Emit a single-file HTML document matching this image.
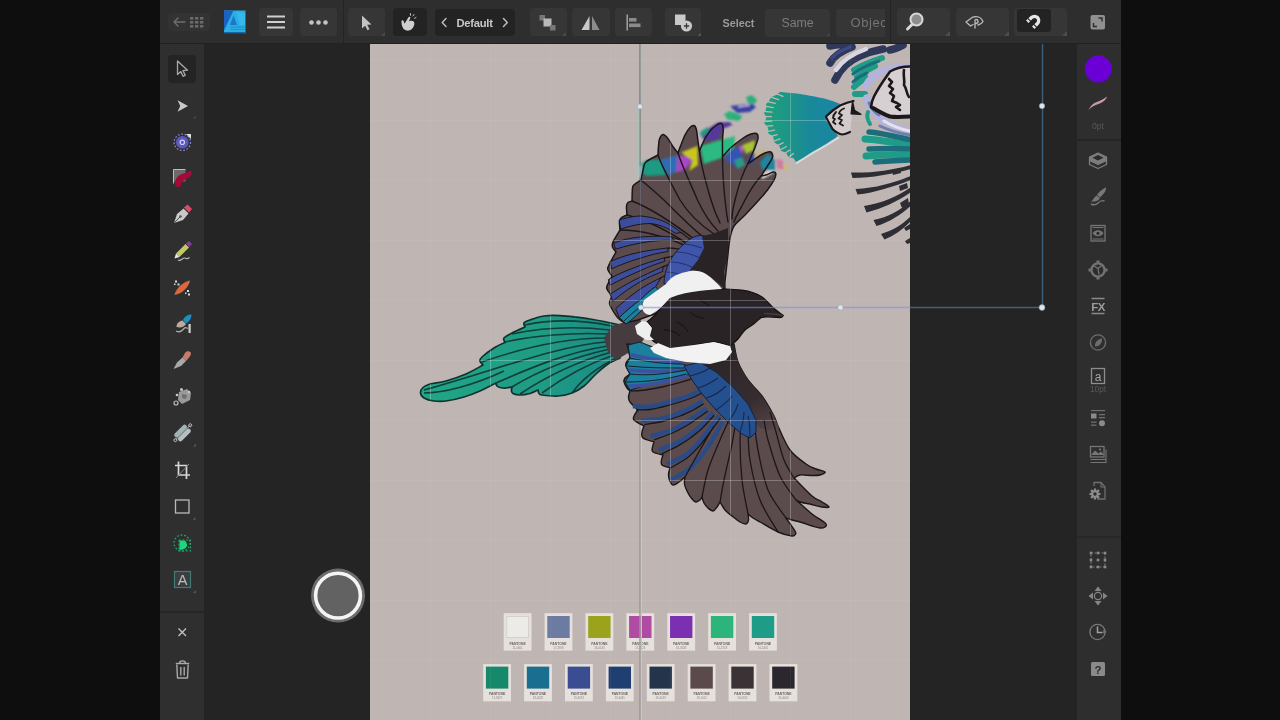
<!DOCTYPE html>
<html><head><meta charset="utf-8"><title>Affinity Designer</title>
<style>
*{box-sizing:border-box;margin:0;padding:0}
html,body{width:1280px;height:720px;overflow:hidden;background:#0e0e0e;font-family:"Liberation Sans",sans-serif}
#app{position:absolute;left:160px;top:0;width:961px;height:720px;background:#242424;overflow:hidden}
#art{position:absolute;left:210px;top:44px;width:540px;height:676px;background:#bfb6b4}
#top{position:absolute;left:0;top:0;width:961px;height:44px;background:#2e2e2e}
#left{position:absolute;left:0;top:44px;width:44px;height:676px;background:#2f2f2f}
#right{position:absolute;left:917px;top:44px;width:44px;height:676px;background:#2e2e2e}
.btn{position:absolute;top:8px;height:28px;background:#363636;border-radius:4px}
.dk{background:#232323}
.t{position:absolute;color:#8a8a8a;font-size:12.5px;line-height:14px;white-space:nowrap}
svg{position:absolute;left:0;top:0;overflow:visible}
#wrap{position:absolute;left:-20px;top:-20px;width:1001px;height:760px;background:#242424;filter:blur(0.5px)}
#inner{position:absolute;left:20px;top:20px;width:961px;height:720px}
</style></head><body>
<div id="app">
<div id="wrap"><div id="inner">
<div id="art"></div>
<svg width="960" height="720" viewBox="160 0 960 720">
<defs>
<clipPath id="artclip"><rect x="370" y="44" width="540" height="676"/></clipPath>
<linearGradient id="fan" x1="765" y1="0" x2="840" y2="0" gradientUnits="userSpaceOnUse"><stop offset="0" stop-color="#1fa07c"/><stop offset=".3" stop-color="#1c9686"/><stop offset=".6" stop-color="#19889a"/><stop offset="1" stop-color="#1a86a2"/></linearGradient>
<filter id="b1" x="-10%" y="-10%" width="120%" height="120%"><feGaussianBlur stdDeviation="0.9"/></filter>
<clipPath id="birdclip"><path d="M625.0 323.0C623.8 322.2 620.2 320.3 618.0 318.0C615.8 315.7 613.4 311.5 612.0 309.0C610.6 306.5 609.5 305.2 609.5 303.0C609.5 300.8 611.6 297.2 612.0 296.0C611.2 295.0 608.3 291.7 607.5 290.0C606.7 288.3 606.2 288.3 607.0 286.0C607.8 283.7 611.2 277.7 612.0 276.0C611.3 275.0 608.6 271.7 608.0 270.0C607.4 268.3 607.2 269.0 608.5 266.0C609.8 263.0 614.8 254.3 616.0 252.0C615.4 251.2 613.0 248.7 612.5 247.0C612.0 245.3 611.8 244.8 613.0 242.0C614.2 239.2 618.8 232.0 620.0 230.0C619.9 228.7 619.3 224.0 619.5 222.0C619.7 220.0 619.8 219.2 621.0 218.0C622.2 216.8 626.0 215.5 627.0 215.0C626.9 213.5 626.3 208.1 626.5 206.0C626.7 203.9 627.1 203.3 628.0 202.5C628.9 201.7 631.3 201.2 632.0 201.0C632.1 198.8 632.1 190.8 632.5 188.0C632.9 185.2 633.1 185.8 634.5 184.5C635.9 183.2 639.9 180.8 641.0 180.0C641.4 178.0 642.7 171.0 643.5 168.0C644.3 165.0 643.6 164.2 646.0 162.0C648.4 159.8 656.0 156.2 658.0 155.0C658.1 153.5 658.2 148.7 658.5 146.0C658.8 143.3 658.8 140.9 659.5 139.0C660.2 137.1 661.7 134.7 663.0 134.5C664.3 134.3 665.9 136.1 667.5 138.0C669.1 139.9 670.8 143.5 672.5 146.0C674.2 148.5 677.1 151.8 678.0 153.0C678.4 151.8 679.3 149.0 680.5 146.0C681.7 143.0 683.4 138.1 685.0 135.0C686.6 131.9 688.5 129.1 690.0 127.5C691.5 125.9 692.9 125.1 694.0 125.5C695.1 125.9 695.9 127.6 696.5 130.0C697.1 132.4 697.3 136.5 697.8 140.0C698.3 143.5 699.2 149.2 699.5 151.0C699.8 150.2 700.6 148.1 701.5 146.0C702.4 143.9 703.6 141.0 705.0 138.5C706.4 136.0 708.2 133.2 710.0 131.0C711.8 128.8 714.1 126.8 716.0 125.5C717.9 124.2 720.3 122.9 721.5 123.5C722.7 124.1 723.0 126.2 723.2 129.0C723.4 131.8 722.6 135.3 722.5 140.0C722.4 144.7 722.5 154.2 722.5 157.0C723.8 155.6 726.7 151.6 730.0 148.5C733.3 145.4 739.0 140.9 742.5 138.5C746.0 136.1 748.7 134.8 751.0 134.0C753.3 133.2 755.3 132.8 756.5 133.5C757.7 134.2 758.4 135.8 758.0 138.5C757.6 141.2 755.7 145.8 754.0 150.0C752.3 154.2 749.0 161.2 748.0 163.5C748.7 163.1 749.8 162.4 752.0 161.0C754.2 159.6 758.3 156.5 761.0 155.0C763.7 153.5 766.2 152.4 768.0 152.0C769.8 151.6 770.8 151.6 771.5 152.5C772.2 153.4 773.2 155.2 772.5 157.5C771.8 159.8 769.4 162.9 767.5 166.0C765.6 169.1 762.1 174.3 761.0 176.0C762.1 175.8 765.5 175.2 767.5 174.5C769.5 173.8 771.6 172.2 773.0 172.0C774.4 171.8 775.6 172.2 775.8 173.5C776.0 174.8 775.4 177.2 774.0 180.0C772.6 182.8 770.1 186.6 767.5 190.0C764.9 193.4 762.4 196.2 758.5 200.5C754.6 204.8 748.1 211.8 744.0 216.0C739.9 220.2 736.3 222.3 734.0 226.0C731.7 229.7 731.0 233.3 730.0 238.0C729.0 242.7 728.3 251.3 728.0 254.0C727.3 260.0 724.7 284.0 724.0 290.0C713.3 293.7 670.7 308.3 660.0 312.0C656.3 313.3 641.7 318.7 638.0 320.0C635.8 320.5 627.2 322.5 625.0 323.0z"/><path d="M627.0 344.0C627.3 345.3 628.5 349.7 629.0 352.0C629.5 354.3 629.8 357.0 630.0 358.0C629.4 358.7 627.2 360.7 626.5 362.0C625.8 363.3 625.4 364.0 626.0 366.0C626.6 368.0 629.3 372.7 630.0 374.0C629.2 374.7 626.0 376.7 625.0 378.0C624.0 379.3 623.7 380.3 624.0 382.0C624.3 383.7 626.0 386.5 627.0 388.0C628.0 389.5 629.5 390.5 630.0 391.0C629.8 392.0 628.5 395.2 628.5 397.0C628.5 398.8 628.4 399.8 630.0 402.0C631.6 404.2 636.7 408.7 638.0 410.0C637.4 410.8 635.2 413.3 634.5 415.0C633.8 416.7 632.4 418.2 634.0 420.0C635.6 421.8 642.3 425.0 644.0 426.0C643.7 427.0 642.2 430.0 642.0 432.0C641.8 434.0 641.0 436.3 643.0 438.0C645.0 439.7 652.2 441.3 654.0 442.0C653.8 442.8 652.7 445.3 652.5 447.0C652.3 448.7 651.2 450.7 653.0 452.0C654.8 453.3 661.3 454.5 663.0 455.0C662.8 455.8 661.7 458.3 661.5 460.0C661.3 461.7 660.6 463.7 662.0 465.0C663.4 466.3 668.7 467.5 670.0 468.0C669.8 469.0 668.6 472.0 668.5 474.0C668.4 476.0 668.8 478.2 669.5 480.0C670.2 481.8 671.4 484.7 673.0 485.0C674.6 485.3 677.0 483.3 679.0 482.0C681.0 480.7 684.0 477.8 685.0 477.0C684.9 478.2 684.2 481.7 684.5 484.0C684.8 486.3 685.8 488.5 687.0 491.0C688.2 493.5 690.5 497.2 692.0 499.0C693.5 500.8 694.7 501.8 696.0 502.0C697.3 502.2 699.0 500.8 700.0 500.0C701.0 499.2 701.7 497.5 702.0 497.0C702.3 498.0 703.0 501.2 704.0 503.0C705.0 504.8 706.5 506.7 708.0 508.0C709.5 509.3 711.5 511.2 713.0 511.0C714.5 510.8 715.8 508.5 717.0 507.0C718.2 505.5 719.5 502.8 720.0 502.0C720.8 503.3 723.0 507.7 725.0 510.0C727.0 512.3 729.5 514.0 732.0 516.0C734.5 518.0 737.7 520.7 740.0 522.0C742.3 523.3 744.6 524.3 746.0 524.0C747.4 523.7 748.2 521.7 748.5 520.0C748.8 518.3 748.1 515.0 748.0 514.0C748.8 514.7 751.0 516.7 753.0 518.0C755.0 519.3 755.8 519.7 760.0 522.0C764.2 524.3 772.7 529.7 778.0 532.0C783.3 534.3 789.1 535.7 792.0 536.0C794.9 536.3 795.0 534.8 795.5 534.0C796.0 533.2 796.6 533.7 795.0 531.0C793.4 528.3 787.5 520.2 786.0 518.0C787.0 518.3 789.7 519.3 792.0 520.0C794.3 520.7 795.3 520.7 800.0 522.0C804.7 523.3 815.7 527.7 820.0 528.0C824.3 528.3 827.3 526.3 826.0 524.0C824.7 521.7 817.0 518.0 812.0 514.0C807.0 510.0 798.7 502.3 796.0 500.0C797.0 500.4 799.7 501.8 802.0 502.5C804.3 503.2 806.7 503.2 810.0 504.0C813.3 504.8 818.8 506.5 822.0 507.0C825.2 507.5 829.0 507.8 829.0 507.0C829.0 506.2 824.8 503.8 822.0 502.0C819.2 500.2 816.7 500.0 812.0 496.0C807.3 492.0 797.0 481.0 794.0 478.0C795.0 477.5 797.0 475.4 800.0 475.0C803.0 474.6 808.7 475.5 812.0 475.5C815.3 475.5 817.8 475.6 820.0 475.0C822.2 474.4 825.7 473.0 825.0 472.0C824.3 471.0 819.2 470.3 816.0 469.0C812.8 467.7 810.3 467.2 806.0 464.0C801.7 460.8 794.7 456.3 790.0 450.0C785.3 443.7 780.7 431.7 778.0 426.0C775.3 420.3 776.7 421.0 774.0 416.0C771.3 411.0 766.3 402.0 762.0 396.0C757.7 390.0 752.0 385.7 748.0 380.0C744.0 374.3 740.3 368.0 738.0 362.0C735.7 356.0 734.7 347.0 734.0 344.0C728.3 345.3 705.7 350.7 700.0 352.0C687.8 350.7 639.2 345.3 627.0 344.0z"/><path d="M670.0 298.0C674.3 295.8 683.7 292.0 690.0 290.5C696.3 289.0 702.0 289.2 708.0 289.0C714.0 288.8 720.4 288.8 726.0 289.0C731.6 289.2 737.2 289.6 741.7 290.2C746.2 290.8 750.0 291.6 753.3 292.7C756.6 293.8 759.2 295.1 761.7 296.8C764.2 298.5 766.4 300.9 768.3 302.7C770.2 304.5 771.6 306.2 773.3 307.7C775.0 309.2 776.6 310.5 778.3 311.8C780.0 313.1 782.5 315.0 783.3 315.6C782.8 316.0 782.8 317.5 780.0 317.7C777.2 317.9 769.9 316.8 766.7 316.8C763.5 316.8 761.8 317.6 760.8 317.7C759.5 318.8 755.9 322.2 753.3 324.3C750.7 326.4 747.5 327.6 745.0 330.0C742.5 332.4 740.5 336.3 738.0 339.0C735.5 341.7 731.3 344.8 730.0 346.0C727.3 345.3 720.0 342.2 714.0 342.0C708.0 341.8 701.3 344.0 694.0 345.0C686.7 346.0 676.3 348.3 670.0 348.0C663.7 347.7 659.3 345.0 656.0 343.0C652.7 341.0 650.7 338.5 650.0 336.0C649.3 333.5 652.5 330.3 652.0 328.0C651.5 325.7 647.8 323.0 647.0 322.0C648.5 320.7 653.2 317.0 656.0 314.0C658.8 311.0 661.7 306.7 664.0 304.0C666.3 301.3 665.7 300.2 670.0 298.0z"/><path d="M620.0 325.0C617.3 324.4 609.0 322.5 604.0 321.5C599.0 320.5 594.8 319.8 590.0 319.0C585.2 318.2 580.0 317.6 575.0 317.0C570.0 316.4 565.2 315.8 560.0 315.6C554.8 315.4 549.0 315.3 544.0 316.0C539.0 316.7 533.3 318.8 530.0 320.0C526.7 321.2 524.8 321.8 524.0 323.0C523.2 324.2 524.8 326.3 525.0 327.0C522.8 328.0 515.5 331.2 512.0 333.0C508.5 334.8 505.2 336.4 504.0 338.0C502.8 339.6 504.8 341.7 505.0 342.4C503.2 343.3 497.8 345.6 494.0 348.0C490.2 350.4 484.3 354.8 482.0 357.0C479.7 359.2 479.8 359.7 480.0 361.0C480.2 362.3 482.5 364.3 483.0 365.0C480.2 366.5 472.2 371.3 466.0 374.0C459.8 376.7 452.0 379.3 446.0 381.0C440.0 382.7 433.8 382.9 430.0 384.0C426.2 385.1 424.6 386.0 423.0 387.5C421.4 389.0 420.3 391.2 420.5 393.0C420.7 394.8 421.8 396.7 424.0 398.0C426.2 399.3 430.3 400.5 434.0 401.0C437.7 401.5 441.0 401.7 446.0 401.0C451.0 400.3 458.3 398.7 464.0 397.0C469.7 395.3 474.7 393.3 480.0 391.0C485.3 388.7 493.3 384.3 496.0 383.0C496.2 383.5 496.3 385.2 497.0 386.0C497.7 386.8 498.5 387.2 500.0 387.5C501.5 387.8 504.0 388.1 506.0 388.0C508.0 387.9 511.0 387.2 512.0 387.0C511.9 387.7 511.3 389.9 511.5 391.0C511.7 392.1 511.6 392.8 513.0 393.5C514.4 394.2 517.2 395.0 520.0 395.0C522.8 395.0 527.0 394.3 530.0 393.5C533.0 392.7 536.7 390.6 538.0 390.0C538.2 390.6 538.3 392.7 539.0 393.5C539.7 394.3 538.8 394.6 542.0 395.0C545.2 395.4 553.0 396.3 558.0 396.0C563.0 395.7 567.7 394.7 572.0 393.0C576.3 391.3 580.0 389.2 584.0 386.0C588.0 382.8 592.0 377.7 596.0 374.0C600.0 370.3 604.0 366.7 608.0 364.0C612.0 361.3 618.0 359.0 620.0 358.0C620.0 352.5 620.0 330.5 620.0 325.0z"/><path d="M840.0 104.0C837.7 103.2 832.7 100.7 826.0 99.0C819.3 97.3 807.7 95.2 800.0 94.0C792.3 92.8 783.3 92.3 780.0 92.0C779.3 92.5 777.5 94.2 776.0 95.0C774.5 95.8 771.8 96.7 771.0 97.0C770.7 97.7 769.8 99.8 769.0 101.0C768.2 102.2 766.5 103.5 766.0 104.0C766.0 104.8 766.3 107.5 766.0 109.0C765.7 110.5 764.3 112.3 764.0 113.0C764.3 113.8 766.0 116.3 766.0 118.0C766.0 119.7 764.3 122.2 764.0 123.0C764.7 123.8 767.3 126.3 768.0 128.0C768.7 129.7 768.0 132.2 768.0 133.0C768.8 133.7 772.0 135.5 773.0 137.0C774.0 138.5 773.8 141.2 774.0 142.0C774.8 142.7 777.8 144.5 779.0 146.0C780.2 147.5 780.7 150.2 781.0 151.0C781.8 151.3 784.7 151.8 786.0 153.0C787.3 154.2 788.5 157.2 789.0 158.0C789.7 158.0 791.8 157.3 793.0 158.0C794.2 158.7 795.5 161.3 796.0 162.0C797.2 161.3 800.3 159.7 803.0 158.0C805.7 156.3 808.2 154.3 812.0 152.0C815.8 149.7 821.7 146.7 826.0 144.0C830.3 141.3 836.0 137.3 838.0 136.0C837.0 134.5 834.0 130.0 832.0 127.0C830.0 124.0 824.7 121.8 826.0 118.0C827.3 114.2 837.7 106.3 840.0 104.0z"/></clipPath>
<linearGradient id="tailg" x1="420" y1="0" x2="620" y2="0" gradientUnits="userSpaceOnUse"><stop offset="0" stop-color="#21a588"/><stop offset=".6" stop-color="#1f9c84"/><stop offset="1" stop-color="#1a8a86"/></linearGradient>
<linearGradient id="shg" x1="730" y1="350" x2="775" y2="430" gradientUnits="userSpaceOnUse"><stop offset="0" stop-color="#2c2528"/><stop offset=".6" stop-color="#372d30"/><stop offset="1" stop-color="#564649"/></linearGradient>
</defs>
<g clip-path="url(#artclip)">
<!-- pantone swatches -->
<g font-family="Liberation Sans, sans-serif" text-anchor="middle">
<rect x="503.7" y="613.2" width="27.8" height="37.4" fill="#e7e1dd"/><rect x="506.4" y="616" width="22.4" height="22" fill="#ecebe8"/><rect x="506.8" y="616.400" width="21.600" height="21.200" fill="none" stroke="#cfcac6" stroke-width=".800"/><text x="517.6" y="644.600" font-size="3.400" font-weight="bold" fill="#6a6462">PANTONE</text><text x="517.6" y="648.500" font-size="2.800" fill="#8a8482">11-0601</text>
<rect x="544.6" y="613.2" width="27.8" height="37.4" fill="#e7e1dd"/><rect x="547.3" y="616" width="22.4" height="22" fill="#6b7ba1"/><text x="558.5" y="644.600" font-size="3.400" font-weight="bold" fill="#6a6462">PANTONE</text><text x="558.5" y="648.500" font-size="2.800" fill="#8a8482">17-3919</text>
<rect x="585.5" y="613.2" width="27.8" height="37.4" fill="#e7e1dd"/><rect x="588.2" y="616" width="22.4" height="22" fill="#9ba21c"/><text x="599.4" y="644.600" font-size="3.400" font-weight="bold" fill="#6a6462">PANTONE</text><text x="599.4" y="648.500" font-size="2.800" fill="#8a8482">16-0543</text>
<rect x="626.4" y="613.2" width="27.8" height="37.4" fill="#e7e1dd"/><rect x="629.1" y="616" width="22.4" height="22" fill="#b04ba3"/><text x="640.3" y="644.600" font-size="3.400" font-weight="bold" fill="#6a6462">PANTONE</text><text x="640.3" y="648.500" font-size="2.800" fill="#8a8482">17-3323</text>
<rect x="667.3" y="613.2" width="27.8" height="37.4" fill="#e7e1dd"/><rect x="670.0" y="616" width="22.4" height="22" fill="#7a30b1"/><text x="681.2" y="644.600" font-size="3.400" font-weight="bold" fill="#6a6462">PANTONE</text><text x="681.2" y="648.500" font-size="2.800" fill="#8a8482">18-3633</text>
<rect x="708.2" y="613.2" width="27.8" height="37.4" fill="#e7e1dd"/><rect x="710.9" y="616" width="22.4" height="22" fill="#2cb57b"/><text x="722.1" y="644.600" font-size="3.400" font-weight="bold" fill="#6a6462">PANTONE</text><text x="722.1" y="648.500" font-size="2.800" fill="#8a8482">15-5728</text>
<rect x="749.1" y="613.2" width="27.8" height="37.4" fill="#e7e1dd"/><rect x="751.8" y="616" width="22.4" height="22" fill="#1f9c88"/><text x="763.0" y="644.600" font-size="3.400" font-weight="bold" fill="#6a6462">PANTONE</text><text x="763.0" y="648.500" font-size="2.800" fill="#8a8482">16-5431</text>
<rect x="483.2" y="664.1" width="27.8" height="37.2" fill="#e7e1dd"/><rect x="485.9" y="666.600" width="22.4" height="22" fill="#17896b"/><text x="497.1" y="695" font-size="3.400" font-weight="bold" fill="#6a6462">PANTONE</text><text x="497.1" y="698.900" font-size="2.800" fill="#8a8482">17-5937</text>
<rect x="524.1" y="664.1" width="27.8" height="37.2" fill="#e7e1dd"/><rect x="526.8" y="666.600" width="22.4" height="22" fill="#1a6e8f"/><text x="538.0" y="695" font-size="3.400" font-weight="bold" fill="#6a6462">PANTONE</text><text x="538.0" y="698.900" font-size="2.800" fill="#8a8482">18-4528</text>
<rect x="565.0" y="664.1" width="27.8" height="37.2" fill="#e7e1dd"/><rect x="567.7" y="666.600" width="22.4" height="22" fill="#3a4d92"/><text x="578.9" y="695" font-size="3.400" font-weight="bold" fill="#6a6462">PANTONE</text><text x="578.9" y="698.900" font-size="2.800" fill="#8a8482">19-3952</text>
<rect x="605.9" y="664.1" width="27.8" height="37.2" fill="#e7e1dd"/><rect x="608.6" y="666.600" width="22.4" height="22" fill="#1f3f73"/><text x="619.8" y="695" font-size="3.400" font-weight="bold" fill="#6a6462">PANTONE</text><text x="619.8" y="698.900" font-size="2.800" fill="#8a8482">19-4045</text>
<rect x="646.8" y="664.1" width="27.8" height="37.2" fill="#e7e1dd"/><rect x="649.5" y="666.600" width="22.4" height="22" fill="#23344b"/><text x="660.7" y="695" font-size="3.400" font-weight="bold" fill="#6a6462">PANTONE</text><text x="660.7" y="698.900" font-size="2.800" fill="#8a8482">19-4023</text>
<rect x="687.7" y="664.1" width="27.8" height="37.2" fill="#e7e1dd"/><rect x="690.4" y="666.600" width="22.4" height="22" fill="#5a4a4c"/><text x="701.6" y="695" font-size="3.400" font-weight="bold" fill="#6a6462">PANTONE</text><text x="701.6" y="698.900" font-size="2.800" fill="#8a8482">19-1012</text>
<rect x="728.6" y="664.1" width="27.8" height="37.2" fill="#e7e1dd"/><rect x="731.3" y="666.600" width="22.4" height="22" fill="#3a3234"/><text x="742.5" y="695" font-size="3.400" font-weight="bold" fill="#6a6462">PANTONE</text><text x="742.5" y="698.900" font-size="2.800" fill="#8a8482">19-0912</text>
<rect x="769.5" y="664.1" width="27.8" height="37.2" fill="#e7e1dd"/><rect x="772.2" y="666.600" width="22.4" height="22" fill="#2a282e"/><text x="783.4" y="695" font-size="3.400" font-weight="bold" fill="#6a6462">PANTONE</text><text x="783.4" y="698.900" font-size="2.800" fill="#8a8482">19-4006</text>
</g>
<!-- guide (under bird) -->
<path d="M640 44V330" stroke="#7d8280" stroke-width="1.500"/>
<path d="M640 330V720" stroke="#989694" stroke-width="1.400"/>
<path d="M641.400 330V720" stroke="#c3c7c1" stroke-width="1.200"/>
<path d="M641.400 44V106" stroke="#aabdb6" stroke-width="1.300"/>
<path d="M638.600 106V175" stroke="#a6c2ba" stroke-width="1.400"/>

<!-- teal fan (second bird tail) -->
<path d="M840.0 104.0C837.7 103.2 832.7 100.7 826.0 99.0C819.3 97.3 807.7 95.2 800.0 94.0C792.3 92.8 783.3 92.3 780.0 92.0C779.3 92.5 777.5 94.2 776.0 95.0C774.5 95.8 771.8 96.7 771.0 97.0C770.7 97.7 769.8 99.8 769.0 101.0C768.2 102.2 766.5 103.5 766.0 104.0C766.0 104.8 766.3 107.5 766.0 109.0C765.7 110.5 764.3 112.3 764.0 113.0C764.3 113.8 766.0 116.3 766.0 118.0C766.0 119.7 764.3 122.2 764.0 123.0C764.7 123.8 767.3 126.3 768.0 128.0C768.7 129.7 768.0 132.2 768.0 133.0C768.8 133.7 772.0 135.5 773.0 137.0C774.0 138.5 773.8 141.2 774.0 142.0C774.8 142.7 777.8 144.5 779.0 146.0C780.2 147.5 780.7 150.2 781.0 151.0C781.8 151.3 784.7 151.8 786.0 153.0C787.3 154.2 788.5 157.2 789.0 158.0C789.7 158.0 791.8 157.3 793.0 158.0C794.2 158.7 795.5 161.3 796.0 162.0C797.2 161.3 800.3 159.7 803.0 158.0C805.7 156.3 808.2 154.3 812.0 152.0C815.8 149.7 821.7 146.7 826.0 144.0C830.3 141.3 836.0 137.3 838.0 136.0C837.0 134.5 834.0 130.0 832.0 127.0C830.0 124.0 824.7 121.8 826.0 118.0C827.3 114.2 837.7 106.3 840.0 104.0z" fill="url(#fan)"/>
<!-- fan serration --><path d="M774.6 93.0L783.0 96.4M770.1 96.9L778.7 99.6M766.6 101.3L775.3 103.4M764.3 106.2L773.2 107.6M763.0 111.3L772.0 112.1M762.5 116.5L771.5 116.6M762.8 121.6L771.7 121.2M763.8 126.7L772.7 125.7M765.8 131.9L774.6 130.1M768.6 137.0L777.2 134.6M771.6 141.9L780.1 138.8M774.9 146.6L783.1 142.8M778.5 151.0L786.3 146.5M782.4 155.1L789.8 150.0M786.5 159.3L793.4 153.5" stroke="#bfb6b4" stroke-width="1.300" fill="none" stroke-linecap="round"/>
<!-- fan halo --><path d="M796 163.500L812 153.500 826 145.500 839 137.500" stroke="#d6dede" stroke-width="1.600" fill="none"/>
<!-- head-like outline -->
<path d="M853.500 101c-5 1-9 2.500-13.500 4.500-5 3-10 7-14 11 1 3 3 6 6.500 12.500 3 3 6 5 10 5.500 2-.200 5-1.300 7.500-2.500" fill="#d3cbcb" stroke="#1c181a" stroke-width="2.200" stroke-linejoin="round" stroke-linecap="round"/>
<path d="M852.500 101l-1.500 13 10 .300-6.500-4z" fill="#1c181a" stroke="#1c181a" stroke-width="1.200" stroke-linejoin="round"/>
<path d="M844 108.500c-3 1-4.500 3-5 5l3 1.500-3.500 3.500 3.500 1.500-2.500 3.500 3.500 2M836 112c-2 2-3 4-3 6l2 1-2 3 2.500 2" fill="none" stroke="#1c181a" stroke-width="1.800" stroke-linejoin="round" stroke-linecap="round"/>
<!-- second bird sketch strokes -->
<g fill="none" stroke-linecap="round">
<g stroke="#2f3858" stroke-width="7.600"><path d="M830 63c4-7 11-12 22-16M835 80c5-11 13-19 25-24 8-3.500 15-5.500 23-7M890 50c5-1 9-3 13-5M830 46c6-1 12-2 20-2"/></g>
<g stroke="#3a4a86" stroke-width="3"><path d="M832 58c4-5 10-8 18-11"/></g>
<g stroke="#d9d6e4" stroke-width="4.500"><path d="M836 70c6-9 16-16 30-21"/></g>
<g stroke="#1f9c88" stroke-width="6"><path d="M854 70c8-5 18-9 28-12M857 77c6-5 12-8 18-11M854 87c4-4 8-7 12-9M855 94h10"/></g>
<g stroke="#1b6d7c" stroke-width="3"><path d="M853 74c8-6 17-10 26-13M853 82c4-4 9-7 14-9"/></g>
<g stroke="#b3b3dc" stroke-width="7.500"><path d="M866 86c4-8 11-13 20-16 6-2 12-3 20-3M867 98c1 6 4 11 9 16 4 5 10 9 20 13 5 2 9 4 14 5"/></g>
<g stroke="#6f7fb0" stroke-width="3"><path d="M869 103c2 5 5 9 10 12M880 126c8 4 18 7 30 9"/></g>
<g stroke="#e4e2ea" stroke-width="3"><path d="M884 121c8 5 16 8 26 10"/></g>
<path d="M910 66.500c-8 0-15 2-20 5-5 7-11 15-16 25-2 4-3 8-3 11l2 1.500c5 3 10 6 17 8.500 6 1 13 .500 20 0z" fill="#d6d0d2" stroke="none"/><g stroke="#1c181a" stroke-width="2.600"><path d="M910 66.500c-8 0-15 2-20 5-5 7-11 15-16 25-2 4-3 8-3 11"/><path d="M889 79l3 3-3 4 4 3-3 4 4 3-2 5 5 2 3 2-4 2 4 3" stroke-linejoin="round"/><path d="M904 70c-1 6 1 10 0 15 3 4 2 8 5 12" /></g>
<g stroke="#1c181a" stroke-width="4"><path d="M873 108c5 3 10 6 17 8.500 6 1 13 .500 20 0"/></g>
<g stroke="#1f9c88" stroke-width="7"><path d="M865 139c14 1 28 3 45 6M866 156c14-1 28-1.500 44-1"/></g>
<g stroke="#1b6d7c" stroke-width="5.500"><path d="M869 132c12 1 25 4 40 7.500M869 149c13-.500 27-.500 41 0M875 162c11-1 23-1.500 35-2"/></g>
<g stroke="#1f9c88" stroke-width="4"><path d="M868 112c-1.500 4-.500 8 2 12"/></g>
</g>
<g fill="#2e2d33"><path d="M851 172.500l1.500 5.500c20-.500 40-4 58-9v-4c-18 5-38 8-59.500 7.500z"/><path d="M855.500 189l2 5.500c18-2 36-8 53-14.500v-4c-17 7-35 12-55 13z"/><path d="M864 206l2.500 6.500c16-4 31-11 44-20v-5c-13 9-29 16-46.500 18.500z"/><path d="M873.500 220l3 6c13-4 24-11 34-20v-5c-10 9-22 16-37 19z"/><path d="M881 234l3.500 5.500c10-4 18-10 26-18v-5c-8 8-18 14-29.500 17.500z"/><path d="M904 228l6-4v5l-4 2zM905 241l5-3v5l-3 1z"/><path d="M892 170l8-2 1 5-8 2zM899 186l8-3 1 5-8 3zM900 203l8-5 1 6-7 4z"/></g>
<!-- tail -->
<path d="M620.0 325.0C617.3 324.4 609.0 322.5 604.0 321.5C599.0 320.5 594.8 319.8 590.0 319.0C585.2 318.2 580.0 317.6 575.0 317.0C570.0 316.4 565.2 315.8 560.0 315.6C554.8 315.4 549.0 315.3 544.0 316.0C539.0 316.7 533.3 318.8 530.0 320.0C526.7 321.2 524.8 321.8 524.0 323.0C523.2 324.2 524.8 326.3 525.0 327.0C522.8 328.0 515.5 331.2 512.0 333.0C508.5 334.8 505.2 336.4 504.0 338.0C502.8 339.6 504.8 341.7 505.0 342.4C503.2 343.3 497.8 345.6 494.0 348.0C490.2 350.4 484.3 354.8 482.0 357.0C479.7 359.2 479.8 359.7 480.0 361.0C480.2 362.3 482.5 364.3 483.0 365.0C480.2 366.5 472.2 371.3 466.0 374.0C459.8 376.7 452.0 379.3 446.0 381.0C440.0 382.7 433.8 382.9 430.0 384.0C426.2 385.1 424.6 386.0 423.0 387.5C421.4 389.0 420.3 391.2 420.5 393.0C420.7 394.8 421.8 396.7 424.0 398.0C426.2 399.3 430.3 400.5 434.0 401.0C437.7 401.5 441.0 401.7 446.0 401.0C451.0 400.3 458.3 398.7 464.0 397.0C469.7 395.3 474.7 393.3 480.0 391.0C485.3 388.7 493.3 384.3 496.0 383.0C496.2 383.5 496.3 385.2 497.0 386.0C497.7 386.8 498.5 387.2 500.0 387.5C501.5 387.8 504.0 388.1 506.0 388.0C508.0 387.9 511.0 387.2 512.0 387.0C511.9 387.7 511.3 389.9 511.5 391.0C511.7 392.1 511.6 392.8 513.0 393.5C514.4 394.2 517.2 395.0 520.0 395.0C522.8 395.0 527.0 394.3 530.0 393.5C533.0 392.7 536.7 390.6 538.0 390.0C538.2 390.6 538.3 392.7 539.0 393.5C539.7 394.3 538.8 394.6 542.0 395.0C545.2 395.4 553.0 396.3 558.0 396.0C563.0 395.7 567.7 394.7 572.0 393.0C576.3 391.3 580.0 389.2 584.0 386.0C588.0 382.8 592.0 377.7 596.0 374.0C600.0 370.3 604.0 366.7 608.0 364.0C612.0 361.3 618.0 359.0 620.0 358.0C620.0 352.5 620.0 330.5 620.0 325.0z" fill="url(#tailg)" stroke="#0e332d" stroke-width="1.700" stroke-linejoin="round"/>
<g fill="none" stroke="#0d4038" stroke-width="1.600"><path d="M612 326c-30-6-60-7-87-1M610 330c-34-4-70-2-98 4M608 334c-36-2-76 2-103 8M606 338c-40 0-84 10-124 24M606 342c-50 4-110 28-182 48M608 346c-40 6-78 22-112 37M610 349c-36 8-72 22-98 38M612 352c-30 8-62 22-92 42M614 355c-24 8-50 22-72 38M618 357c-20 10-36 22-46 36"/><path d="M424 393c20 0 50-8 80-22"/></g>
<!-- rear body -->
<path d="M604 338L612 326 625 322 638 318 650 330 640 345 630 352 616 360 608 352z" fill="#463c40"/>
<!-- UPPER WING -->
<path d="M625.0 323.0C623.8 322.2 620.2 320.3 618.0 318.0C615.8 315.7 613.4 311.5 612.0 309.0C610.6 306.5 609.5 305.2 609.5 303.0C609.5 300.8 611.6 297.2 612.0 296.0C611.2 295.0 608.3 291.7 607.5 290.0C606.7 288.3 606.2 288.3 607.0 286.0C607.8 283.7 611.2 277.7 612.0 276.0C611.3 275.0 608.6 271.7 608.0 270.0C607.4 268.3 607.2 269.0 608.5 266.0C609.8 263.0 614.8 254.3 616.0 252.0C615.4 251.2 613.0 248.7 612.5 247.0C612.0 245.3 611.8 244.8 613.0 242.0C614.2 239.2 618.8 232.0 620.0 230.0C619.9 228.7 619.3 224.0 619.5 222.0C619.7 220.0 619.8 219.2 621.0 218.0C622.2 216.8 626.0 215.5 627.0 215.0C626.9 213.5 626.3 208.1 626.5 206.0C626.7 203.9 627.1 203.3 628.0 202.5C628.9 201.7 631.3 201.2 632.0 201.0C632.1 198.8 632.1 190.8 632.5 188.0C632.9 185.2 633.1 185.8 634.5 184.5C635.9 183.2 639.9 180.8 641.0 180.0C641.4 178.0 642.7 171.0 643.5 168.0C644.3 165.0 643.6 164.2 646.0 162.0C648.4 159.8 656.0 156.2 658.0 155.0C658.1 153.5 658.2 148.7 658.5 146.0C658.8 143.3 658.8 140.9 659.5 139.0C660.2 137.1 661.7 134.7 663.0 134.5C664.3 134.3 665.9 136.1 667.5 138.0C669.1 139.9 670.8 143.5 672.5 146.0C674.2 148.5 677.1 151.8 678.0 153.0C678.4 151.8 679.3 149.0 680.5 146.0C681.7 143.0 683.4 138.1 685.0 135.0C686.6 131.9 688.5 129.1 690.0 127.5C691.5 125.9 692.9 125.1 694.0 125.5C695.1 125.9 695.9 127.6 696.5 130.0C697.1 132.4 697.3 136.5 697.8 140.0C698.3 143.5 699.2 149.2 699.5 151.0C699.8 150.2 700.6 148.1 701.5 146.0C702.4 143.9 703.6 141.0 705.0 138.5C706.4 136.0 708.2 133.2 710.0 131.0C711.8 128.8 714.1 126.8 716.0 125.5C717.9 124.2 720.3 122.9 721.5 123.5C722.7 124.1 723.0 126.2 723.2 129.0C723.4 131.8 722.6 135.3 722.5 140.0C722.4 144.7 722.5 154.2 722.5 157.0C723.8 155.6 726.7 151.6 730.0 148.5C733.3 145.4 739.0 140.9 742.5 138.5C746.0 136.1 748.7 134.8 751.0 134.0C753.3 133.2 755.3 132.8 756.5 133.5C757.7 134.2 758.4 135.8 758.0 138.5C757.6 141.2 755.7 145.8 754.0 150.0C752.3 154.2 749.0 161.2 748.0 163.5C748.7 163.1 749.8 162.4 752.0 161.0C754.2 159.6 758.3 156.5 761.0 155.0C763.7 153.5 766.2 152.4 768.0 152.0C769.8 151.6 770.8 151.6 771.5 152.5C772.2 153.4 773.2 155.2 772.5 157.5C771.8 159.8 769.4 162.9 767.5 166.0C765.6 169.1 762.1 174.3 761.0 176.0C762.1 175.8 765.5 175.2 767.5 174.5C769.5 173.8 771.6 172.2 773.0 172.0C774.4 171.8 775.6 172.2 775.8 173.5C776.0 174.8 775.4 177.2 774.0 180.0C772.6 182.8 770.1 186.6 767.5 190.0C764.9 193.4 762.4 196.2 758.5 200.5C754.6 204.8 748.1 211.8 744.0 216.0C739.9 220.2 736.3 222.3 734.0 226.0C731.7 229.7 731.0 233.3 730.0 238.0C729.0 242.7 728.3 251.3 728.0 254.0C727.3 260.0 724.7 284.0 724.0 290.0C713.3 293.7 670.7 308.3 660.0 312.0C656.3 313.3 641.7 318.7 638.0 320.0C635.8 320.5 627.2 322.5 625.0 323.0z" fill="#5b4b4d"/>
<g filter="url(#b1)">
<path d="M641 164L646 160 660 159.400 666 175 646 176 642.500 172.500z" fill="#1f9a84"/>
<path d="M640.500 166c-1.500 4-1 8 0 12" stroke="#9fd6cc" stroke-width="1.500" fill="none"/>
<path d="M660 160L677.500 155 680 170 667.500 175.500z" fill="#2f6cb4"/>
<path d="M677.500 156L689 156 692.500 160 685 170 676 172.500z" fill="#a646c4"/>
<path d="M681 152.500L697.500 146 698 165 689 171 692.500 160 686 156z" fill="#c9c71e"/>
<path d="M700 146L735 136 734 147.500 722.500 157.500 704 164z" fill="#2cba82"/>
<path d="M700 134L717.500 122.500 730 122 732.500 125 722.500 129 717.500 140 705 141z" fill="#54389c"/>
<path d="M700 132l8-5 1 5-7 5z" fill="#1f9a84"/>
<path d="M724 114L730 111 742.500 116 739 121 727.500 119.500z" fill="#2cb07a"/>
<path d="M730 106L752 103.500 756 107 750 112 737 113z" fill="#3a40a4"/>
<path d="M738 107l12-2" stroke="#e8e8f4" stroke-width="1.200" fill="none"/>
<path d="M746 97L752 95 757 100 755 104 748 103z" fill="#2cae7a"/>
<path d="M729 151L740 146 742.500 157.500 737.500 167.500 725 160z" fill="#3552b4"/>
<path d="M739 146L744 146 742.500 154z" fill="#c060b0"/>
<path d="M742.500 145L755 140 754 150 746 154z" fill="#a8c432"/>
<path d="M734 160L742.500 157.500 745 165 737.500 169z" fill="#2a9a86"/>
<path d="M747.500 157.500L755 152.500 754 162.500 747.500 165z" fill="#3a48a0"/>
<path d="M755 156.500L765 151" stroke="#c8b840" stroke-width="2" fill="none"/>
<path d="M760 162.500L767.500 154 775 160 775 170 762.500 170z" fill="#1f86a0"/>
<path d="M776 159L782.500 160 784 169 777.500 169z" fill="#d07aa0"/>
<path d="M782.500 165L789 166 786 170z" fill="#d8c040"/>
<path d="M761 176L770 171 774 172.500 762.500 179z" fill="#e6e6e6"/>
</g>

<path d="M625.0 323.0C623.8 322.2 620.2 320.3 618.0 318.0C615.8 315.7 613.4 311.5 612.0 309.0C610.6 306.5 609.5 305.2 609.5 303.0C609.5 300.8 611.6 297.2 612.0 296.0C611.2 295.0 608.3 291.7 607.5 290.0C606.7 288.3 606.2 288.3 607.0 286.0C607.8 283.7 611.2 277.7 612.0 276.0C611.3 275.0 608.6 271.7 608.0 270.0C607.4 268.3 607.2 269.0 608.5 266.0C609.8 263.0 614.8 254.3 616.0 252.0C615.4 251.2 613.0 248.7 612.5 247.0C612.0 245.3 611.8 244.8 613.0 242.0C614.2 239.2 618.8 232.0 620.0 230.0C619.9 228.7 619.3 224.0 619.5 222.0C619.7 220.0 619.8 219.2 621.0 218.0C622.2 216.8 626.0 215.5 627.0 215.0C626.9 213.5 626.3 208.1 626.5 206.0C626.7 203.9 627.1 203.3 628.0 202.5C628.9 201.7 631.3 201.2 632.0 201.0C632.1 198.8 632.1 190.8 632.5 188.0C632.9 185.2 633.1 185.8 634.5 184.5C635.9 183.2 639.9 180.8 641.0 180.0C641.4 178.0 642.7 171.0 643.5 168.0C644.3 165.0 643.6 164.2 646.0 162.0C648.4 159.8 656.0 156.2 658.0 155.0C658.1 153.5 658.2 148.7 658.5 146.0C658.8 143.3 658.8 140.9 659.5 139.0C660.2 137.1 661.7 134.7 663.0 134.5C664.3 134.3 665.9 136.1 667.5 138.0C669.1 139.9 670.8 143.5 672.5 146.0C674.2 148.5 677.1 151.8 678.0 153.0C678.4 151.8 679.3 149.0 680.5 146.0C681.7 143.0 683.4 138.1 685.0 135.0C686.6 131.9 688.5 129.1 690.0 127.5C691.5 125.9 692.9 125.1 694.0 125.5C695.1 125.9 695.9 127.6 696.5 130.0C697.1 132.4 697.3 136.5 697.8 140.0C698.3 143.5 699.2 149.2 699.5 151.0C699.8 150.2 700.6 148.1 701.5 146.0C702.4 143.9 703.6 141.0 705.0 138.5C706.4 136.0 708.2 133.2 710.0 131.0C711.8 128.8 714.1 126.8 716.0 125.5C717.9 124.2 720.3 122.9 721.5 123.5C722.7 124.1 723.0 126.2 723.2 129.0C723.4 131.8 722.6 135.3 722.5 140.0C722.4 144.7 722.5 154.2 722.5 157.0C723.8 155.6 726.7 151.6 730.0 148.5C733.3 145.4 739.0 140.9 742.5 138.5C746.0 136.1 748.7 134.8 751.0 134.0C753.3 133.2 755.3 132.8 756.5 133.5C757.7 134.2 758.4 135.8 758.0 138.5C757.6 141.2 755.7 145.8 754.0 150.0C752.3 154.2 749.0 161.2 748.0 163.5C748.7 163.1 749.8 162.4 752.0 161.0C754.2 159.6 758.3 156.5 761.0 155.0C763.7 153.5 766.2 152.4 768.0 152.0C769.8 151.6 770.8 151.6 771.5 152.5C772.2 153.4 773.2 155.2 772.5 157.5C771.8 159.8 769.4 162.9 767.5 166.0C765.6 169.1 762.1 174.3 761.0 176.0C762.1 175.8 765.5 175.2 767.5 174.5C769.5 173.8 771.6 172.2 773.0 172.0C774.4 171.8 775.6 172.2 775.8 173.5C776.0 174.8 775.4 177.2 774.0 180.0C772.6 182.8 770.1 186.6 767.5 190.0C764.9 193.4 762.4 196.2 758.5 200.5C754.6 204.8 748.1 211.8 744.0 216.0C739.9 220.2 736.3 222.3 734.0 226.0C731.7 229.7 731.0 233.3 730.0 238.0C729.0 242.7 728.3 251.3 728.0 254.0C727.3 260.0 724.7 284.0 724.0 290.0C713.3 293.7 670.7 308.3 660.0 312.0C656.3 313.3 641.7 318.7 638.0 320.0C635.8 320.5 627.2 322.5 625.0 323.0z" fill="none" stroke="#1c1618" stroke-width="1.500" stroke-linejoin="round"/>
<!-- feather lines primaries -->
<g fill="none" stroke="#1c1618" stroke-width="1.400" stroke-linecap="round"><path d="M678 153C682 166 689 180 697.500 200 704 214 711 224 718 231M699.500 151C701 166 705 180 711 200 714 210 717 217 720 223M722.500 157C722.500 168 723 180 725 200 726 210 727 216 728 222M748 163.500C743 172 739 184 735 200 733 208 732 214 732 219M761 176C754 184 749 192 745 200 740 210 736 216 734 222M658 155C661 164 667 176 680 200 690 216 702 226 714 234M641 180C648 186 658 194 670 206 682 218 692 228 702 236M632 201C650 208 672 222 698 242M627 215C648 220 670 232 694 248M620 230c22 0 44 6 66 16"/></g>
<!-- blue stripes secondaries -->
<g fill="none" stroke-linecap="round"><g fill="#3d4d9e" stroke="#1c1618" stroke-width="1" stroke-linejoin="round"><path d="M619.500 220C628 217 636 216 641 216 652 217 662 220 668 223.500 674 227 678 230 681 232.500L675.500 233.400C668 228 660 224.500 650 223.500 640 223.500 630 226 621 229z"/><path d="M614 243C624 239 634 237.500 641 237 652 236 664 236 672 237L673.700 240.600C666 240 658 240.500 650 241.500 638 243 626 246 616 249z"/><path d="M610.500 261.400C618 258 626 255.500 632 254 644 251 658 249 668 248L668 251.500C658 253 650 255 641 258 630 261 620 265 612 268.600z"/><path d="M608.600 279.500C616 275 624 271.500 632 268.600 642 264.500 654 260.500 664.600 257.800L664.600 261.400C656 264 648 267 641 270.400 630 275 620 280 610.500 285z"/><path d="M610.500 294C618 289 625 285 632 281.300 642 276 653 271 662.800 266.800L662.800 271.400C655 274.500 648 277.500 641 281.300 631 287 621 294 613 301z"/><path d="M615.900 308.400C624 301 633 294 641 288.500 648 284 655 280.500 661 277.700L655.600 286.700C650 290.500 645 295 641 299.300 633 305 626 311 619.500 317.400z"/></g>
<g stroke="#1c1618" stroke-width="1.300"><path d="M681 232.500C686 236 691 240 696 244M672 237C679 239 685 242 690 246M668 248C674 248 680 249 684 250.500M664.600 257.800C670 256.500 674 256 678 256M662.800 266.800C666 265.500 669 264.500 672 264M661 277.700L668 274"/></g></g>
<!-- teal stripes near body -->
<path d="M619.500 317.400C626 311 633 305 641 299.300 645 295 650 290.500 655.600 286.700L662 294C654 300 646 306 640 312 635 317 630 321 626 324z" fill="#1b7fa0" stroke="#12242c" stroke-width="1"/>
<path d="M624 321c8-8 18-16 30-24" fill="none" stroke="#12242c" stroke-width="1"/>
<!-- blue coverts -->
<path d="M664 284C664 268 672 254 684 244 690 238 698 234 704 236 708 242 704 254 696 264 690 272 682 280 676 286z" fill="#3f55aa" stroke="#1c1c30" stroke-width="1"/>
<g fill="none" stroke="#24306a" stroke-width="1.100"><path d="M670 262c8 0 16 2 24 6M676 252c8 0 16 2 24 6M684 244c6 0 12 2 18 4M666 272c8 0 14 2 22 6"/></g>
<!-- black scapulars -->
<path d="M702 236L712 234 728 228 728 254 724 272 726 290 712 278 698 271 690 270 698 260 704 248z" fill="#2a2326"/>
<!-- LOWER WING -->
<path d="M627.0 344.0C627.3 345.3 628.5 349.7 629.0 352.0C629.5 354.3 629.8 357.0 630.0 358.0C629.4 358.7 627.2 360.7 626.5 362.0C625.8 363.3 625.4 364.0 626.0 366.0C626.6 368.0 629.3 372.7 630.0 374.0C629.2 374.7 626.0 376.7 625.0 378.0C624.0 379.3 623.7 380.3 624.0 382.0C624.3 383.7 626.0 386.5 627.0 388.0C628.0 389.5 629.5 390.5 630.0 391.0C629.8 392.0 628.5 395.2 628.5 397.0C628.5 398.8 628.4 399.8 630.0 402.0C631.6 404.2 636.7 408.7 638.0 410.0C637.4 410.8 635.2 413.3 634.5 415.0C633.8 416.7 632.4 418.2 634.0 420.0C635.6 421.8 642.3 425.0 644.0 426.0C643.7 427.0 642.2 430.0 642.0 432.0C641.8 434.0 641.0 436.3 643.0 438.0C645.0 439.7 652.2 441.3 654.0 442.0C653.8 442.8 652.7 445.3 652.5 447.0C652.3 448.7 651.2 450.7 653.0 452.0C654.8 453.3 661.3 454.5 663.0 455.0C662.8 455.8 661.7 458.3 661.5 460.0C661.3 461.7 660.6 463.7 662.0 465.0C663.4 466.3 668.7 467.5 670.0 468.0C669.8 469.0 668.6 472.0 668.5 474.0C668.4 476.0 668.8 478.2 669.5 480.0C670.2 481.8 671.4 484.7 673.0 485.0C674.6 485.3 677.0 483.3 679.0 482.0C681.0 480.7 684.0 477.8 685.0 477.0C684.9 478.2 684.2 481.7 684.5 484.0C684.8 486.3 685.8 488.5 687.0 491.0C688.2 493.5 690.5 497.2 692.0 499.0C693.5 500.8 694.7 501.8 696.0 502.0C697.3 502.2 699.0 500.8 700.0 500.0C701.0 499.2 701.7 497.5 702.0 497.0C702.3 498.0 703.0 501.2 704.0 503.0C705.0 504.8 706.5 506.7 708.0 508.0C709.5 509.3 711.5 511.2 713.0 511.0C714.5 510.8 715.8 508.5 717.0 507.0C718.2 505.5 719.5 502.8 720.0 502.0C720.8 503.3 723.0 507.7 725.0 510.0C727.0 512.3 729.5 514.0 732.0 516.0C734.5 518.0 737.7 520.7 740.0 522.0C742.3 523.3 744.6 524.3 746.0 524.0C747.4 523.7 748.2 521.7 748.5 520.0C748.8 518.3 748.1 515.0 748.0 514.0C748.8 514.7 751.0 516.7 753.0 518.0C755.0 519.3 755.8 519.7 760.0 522.0C764.2 524.3 772.7 529.7 778.0 532.0C783.3 534.3 789.1 535.7 792.0 536.0C794.9 536.3 795.0 534.8 795.5 534.0C796.0 533.2 796.6 533.7 795.0 531.0C793.4 528.3 787.5 520.2 786.0 518.0C787.0 518.3 789.7 519.3 792.0 520.0C794.3 520.7 795.3 520.7 800.0 522.0C804.7 523.3 815.7 527.7 820.0 528.0C824.3 528.3 827.3 526.3 826.0 524.0C824.7 521.7 817.0 518.0 812.0 514.0C807.0 510.0 798.7 502.3 796.0 500.0C797.0 500.4 799.7 501.8 802.0 502.5C804.3 503.2 806.7 503.2 810.0 504.0C813.3 504.8 818.8 506.5 822.0 507.0C825.2 507.5 829.0 507.8 829.0 507.0C829.0 506.2 824.8 503.8 822.0 502.0C819.2 500.2 816.7 500.0 812.0 496.0C807.3 492.0 797.0 481.0 794.0 478.0C795.0 477.5 797.0 475.4 800.0 475.0C803.0 474.6 808.7 475.5 812.0 475.5C815.3 475.5 817.8 475.6 820.0 475.0C822.2 474.4 825.7 473.0 825.0 472.0C824.3 471.0 819.2 470.3 816.0 469.0C812.8 467.7 810.3 467.2 806.0 464.0C801.7 460.8 794.7 456.3 790.0 450.0C785.3 443.7 780.7 431.7 778.0 426.0C775.3 420.3 776.7 421.0 774.0 416.0C771.3 411.0 766.3 402.0 762.0 396.0C757.7 390.0 752.0 385.7 748.0 380.0C744.0 374.3 740.3 368.0 738.0 362.0C735.7 356.0 734.7 347.0 734.0 344.0C728.3 345.3 705.7 350.7 700.0 352.0C687.8 350.7 639.2 345.3 627.0 344.0z" fill="#5b4b4d" stroke="#1c1618" stroke-width="1.400" stroke-linejoin="round"/>
<!-- dark shoulder -->
<path d="M696 356L734 344 738 362 748 380 762 396 774 416 779 428 770 430 760 428 756 424 748 404 734 388 716 372 700 364z" fill="url(#shg)"/>
<!-- blue stripes on lower secondaries -->
<g fill="none" stroke-linecap="butt"><g stroke="#2b4b86" stroke-width="4.400"><path d="M632.8 406.2C635.5 406.3 644.1 407.0 648.8 406.7C653.5 406.4 655.8 405.4 660.8 404.2C665.8 402.9 673.6 400.8 678.8 399.2C684.0 397.6 688.1 396.2 691.8 394.7C695.5 393.2 699.3 390.9 700.8 390.2M641.2 420.8C644.5 420.4 654.5 420.0 660.8 418.7C667.1 417.4 673.6 415.1 678.8 413.2C684.0 411.3 688.1 409.2 692.1 407.2C696.1 405.2 700.8 402.0 702.6 401.0M650.6 436.2C654.0 435.2 665.6 432.4 671.3 430.2C677.0 428.0 680.6 425.6 684.8 423.2C689.0 420.8 692.6 418.0 696.3 415.5C700.0 413.0 705.0 409.4 706.8 408.2M658.8 450.0C661.9 448.8 672.4 445.1 677.6 442.6C682.8 440.0 686.0 437.5 689.8 434.7C693.6 431.9 696.6 429.7 700.5 426.0C704.4 422.3 710.9 414.7 713.0 412.4M667.2 464.2C670.3 462.7 680.9 458.4 685.8 455.2C690.7 451.9 693.3 448.5 696.8 444.7C700.3 440.9 703.1 437.1 706.8 432.2C710.5 427.3 717.1 418.3 719.2 415.5M670.3 480.2C673.4 478.4 683.5 473.4 688.8 469.2C694.0 465.0 697.8 460.2 701.8 455.2C705.8 450.2 709.3 444.9 712.8 439.2C716.3 433.5 721.1 424.2 722.8 421.2"/></g>
<g stroke="#1c1618" stroke-width="1.300"><path d="M630.8 391.0C633.2 390.8 639.8 390.7 645.0 390.0C650.2 389.3 654.7 388.7 662.0 387.0C669.3 385.3 683.8 381.3 689.0 379.8C694.2 378.3 692.3 378.3 693.0 378.0M636.0 410.0C638.3 409.9 645.7 410.0 650.0 409.5C654.3 409.0 657.0 408.2 662.0 407.0C667.0 405.8 674.8 403.6 680.0 402.0C685.2 400.4 689.3 399.0 693.0 397.5C696.7 396.0 700.5 393.8 702.0 393.0M644.4 424.6C647.3 424.1 656.1 422.9 662.0 421.5C667.9 420.1 674.8 417.9 680.0 416.0C685.2 414.1 689.3 412.0 693.3 410.0C697.3 408.0 702.0 404.8 703.8 403.8M653.8 440.0C656.9 438.8 667.1 435.3 672.5 433.0C677.9 430.7 681.8 428.4 686.0 426.0C690.2 423.6 693.8 420.8 697.5 418.3C701.2 415.8 706.2 412.2 708.0 411.0M662.0 453.8C664.8 452.4 674.0 448.1 678.8 445.4C683.6 442.7 687.2 440.3 691.0 437.5C694.8 434.7 697.8 432.5 701.7 428.8C705.6 425.1 712.1 417.5 714.2 415.2M670.4 468.0C673.2 466.3 682.4 461.4 687.0 458.0C691.6 454.6 694.5 451.3 698.0 447.5C701.5 443.7 704.3 439.9 708.0 435.0C711.7 430.1 718.3 421.1 720.4 418.3M685.0 477.0C687.5 472.5 695.2 458.5 700.0 450.0C704.8 441.5 711.7 430.0 714.0 426.0M702.0 497.0C703.0 492.5 705.0 479.5 708.0 470.0C711.0 460.5 716.5 448.3 720.0 440.0C723.5 431.7 727.5 423.3 729.0 420.0M720.0 502.0C720.7 498.3 722.0 489.7 724.0 480.0C726.0 470.3 730.0 454.0 732.0 444.0C734.0 434.0 735.3 424.0 736.0 420.0M748.0 514.0C747.0 508.3 743.3 492.3 742.0 480.0C740.7 467.7 740.0 450.0 740.0 440.0C740.0 430.0 741.7 423.3 742.0 420.0M786.0 518.0C783.0 513.3 772.7 501.3 768.0 490.0C763.3 478.7 760.3 461.7 758.0 450.0C755.7 438.3 754.7 425.0 754.0 420.0M796.0 500.0C793.3 496.0 784.7 486.0 780.0 476.0C775.3 466.0 770.7 449.3 768.0 440.0C765.3 430.7 764.7 423.3 764.0 420.0M794.0 478.0C792.3 475.0 787.0 467.7 784.0 460.0C781.0 452.3 778.3 440.0 776.0 432.0C773.7 424.0 771.0 415.3 770.0 412.0M778.0 532.0C775.0 526.7 764.7 512.0 760.0 500.0C755.3 488.0 752.0 471.7 750.0 460.0C748.0 448.3 748.3 435.0 748.0 430.0"/></g></g>
<!-- teal feathers top-left of lower wing -->
<path d="M628 345L640 342 660 350 686 366 690 374 670 380 650 384 630 390 625 382 630 374 626 366 630 358z" fill="#1c7f9e" stroke="#12242c" stroke-width="1.100"/>
<g fill="none" stroke-linecap="round"><g stroke="#3a52a0" stroke-width="3.400"><path d="M632 355c16 4 32 6 50 8M630 370c18 2 36 2 54 0M630 386c18 0 36-4 56-10"/></g><g stroke="#12242c" stroke-width="1"><path d="M630 358c18 4 34 6 52 6M628 366c18 2 38 2 56 2M630 374c18 2 36 0 56-4M626 382c20 0 38-2 60-8"/></g></g>
<!-- blue coverts lower wing -->
<path d="M684 366L700 362 716 372 734 388 748 404 756 420 756 432 750 438 742 434 730 424 716 410 702 394 692 380z" fill="#25508f" stroke="#14203c" stroke-width="1"/>
<g fill="none" stroke="#14284e" stroke-width="1.100"><path d="M690 376c8-2 14-4 20-8M698 388c8-2 14-6 20-10M706 398c8-2 14-6 20-12M716 410c6-4 12-8 16-14M728 422c4-6 8-10 10-18M740 432c2-6 4-12 4-20M750 438c0-8 0-14-2-22"/></g>
<!-- BODY -->
<path d="M670.0 298.0C674.3 295.8 683.7 292.0 690.0 290.5C696.3 289.0 702.0 289.2 708.0 289.0C714.0 288.8 720.4 288.8 726.0 289.0C731.6 289.2 737.2 289.6 741.7 290.2C746.2 290.8 750.0 291.6 753.3 292.7C756.6 293.8 759.2 295.1 761.7 296.8C764.2 298.5 766.4 300.9 768.3 302.7C770.2 304.5 771.6 306.2 773.3 307.7C775.0 309.2 776.6 310.5 778.3 311.8C780.0 313.1 782.5 315.0 783.3 315.6C782.8 316.0 782.8 317.5 780.0 317.7C777.2 317.9 769.9 316.8 766.7 316.8C763.5 316.8 761.8 317.6 760.8 317.7C759.5 318.8 755.9 322.2 753.3 324.3C750.7 326.4 747.5 327.6 745.0 330.0C742.5 332.4 740.5 336.3 738.0 339.0C735.5 341.7 731.3 344.8 730.0 346.0C727.3 345.3 720.0 342.2 714.0 342.0C708.0 341.8 701.3 344.0 694.0 345.0C686.7 346.0 676.3 348.3 670.0 348.0C663.7 347.7 659.3 345.0 656.0 343.0C652.7 341.0 650.7 338.5 650.0 336.0C649.3 333.5 652.5 330.3 652.0 328.0C651.5 325.7 647.8 323.0 647.0 322.0C648.5 320.7 653.2 317.0 656.0 314.0C658.8 311.0 661.7 306.7 664.0 304.0C666.3 301.3 665.7 300.2 670.0 298.0z" fill="#2a2326" stroke="#15100f" stroke-width="1.200" stroke-linejoin="round"/>
<path d="M700 300l10 6M690 312c4 4 10 6 14 6M676 322c6 2 10 6 12 10M664 330c6 0 12 2 16 6" stroke="#15100f" stroke-width="1" fill="none"/>
<!-- beak hl --><path d="M764 313.500l14 .800 4.500 1.500" stroke="#4a4446" stroke-width="1.200" fill="none"/>
<!-- white patches -->
<path d="M666 284C670 278 676 274 686 272 692 270 700 270 706 274 712 278 718 284 722 289 710 290 690 290 670 298 664 304 660 310 650 315 644 314 640 310 644 300 654 290z" fill="#f0f0f0"/>
<path d="M650 348L658 343 670 348 694 345 714 342 730 346 732 352 726 360 710 364 686 362 666 358 654 353z" fill="#f2f2f2"/>
<path d="M635 326L642 321 647 322 652 328 650 336 654 340 646 340 637 334z" fill="#eeeeee"/>

<!-- grid -->
<g stroke="#ffffff" stroke-width="1" fill="none"><path d="M430.5 44V720M490.5 44V720M550.5 44V720M610.5 44V720M670.5 44V720M730.5 44V720M790.5 44V720M850.5 44V720M910.5 44V720M370 60.5H910M370 120.5H910M370 180.5H910M370 240.5H910M370 300.5H910M370 360.5H910M370 420.5H910M370 480.5H910M370 540.5H910M370 600.5H910M370 660.5H910" stroke-opacity="0.05"/><path d="M430.5 44V720M490.5 44V720M550.5 44V720M610.5 44V720M670.5 44V720M730.5 44V720M790.5 44V720M850.5 44V720M910.5 44V720M370 60.5H910M370 120.5H910M370 180.5H910M370 240.5H910M370 300.5H910M370 360.5H910M370 420.5H910M370 480.5H910M370 540.5H910M370 600.5H910M370 660.5H910" stroke-opacity="0.22" clip-path="url(#birdclip)"/></g>


</g>
<!-- guide + selection -->
<path d="M640 307.500H910" fill="none" stroke="#7a8fd8" stroke-width="1.400" opacity=".6"/><path d="M910 307.500H1042.500V44" fill="none" stroke="#40607c" stroke-width="1.400"/>
<path d="M640.500 168V307" stroke="#7f9fd0" stroke-width="1" opacity=".25"/>
<g fill="#e4e4e4" stroke="#7f98b8" stroke-width=".500"><circle cx="640" cy="106.500" r="2.600"/><circle cx="1042" cy="106" r="2.700"/><circle cx="1042" cy="307.500" r="2.900"/><circle cx="840.500" cy="307.500" r="2.700"/><circle cx="641" cy="307.500" r="2.500"/></g>
<!-- touch circle -->
<circle cx="338" cy="595.600" r="27" fill="#6c6c6c"/><circle cx="338" cy="595.600" r="22.400" fill="#626262" stroke="#f4f4f4" stroke-width="3.600"/>

</svg>

<div id="top">
<div class="btn" style="left:8px;top:13px;width:42px;height:18px;background:#333"></div>
<svg width="960" height="44" viewBox="0 0 960 44">
<!-- back arrow + grid -->
<g stroke="#6e6e6e" stroke-width="1.4" fill="none" stroke-linecap="round" stroke-linejoin="round"><path d="M14 22h11M18 18l-4 4 4 4"/></g>
<g fill="#6a6a6a"><rect x="30" y="17" width="3.4" height="2.6"/><rect x="35" y="17" width="3.4" height="2.6"/><rect x="40" y="17" width="3.4" height="2.6"/><rect x="30" y="21" width="3.4" height="2.6"/><rect x="35" y="21" width="3.4" height="2.6"/><rect x="40" y="21" width="3.4" height="2.6"/><rect x="30" y="25" width="3.4" height="2.6"/><rect x="35" y="25" width="3.4" height="2.6"/><rect x="40" y="25" width="3.4" height="2.6"/></g>
<!-- affinity logo -->
<rect x="64" y="10.500" width="21.500" height="23.500" fill="#2badE6"/>
<path d="M64 10.500h9.500L64 30.500z" fill="#1b63c2"/>
<path d="M73.500 15.500l3.500 9.500h-7z" fill="#1a78c6"/>
<path d="M70.500 26.500h14v1.200h-14zM70.500 29h14v1h-14z" fill="#1f93d4"/>
<path d="M76 12l9 1v12l-5 0z" fill="#3cc0f0" opacity=".6"/>
<path d="M64 32.300h21.500v1.700H64z" fill="#0c4a86"/>
</svg>
<div class="btn" style="left:99px;width:34px"></div>
<div class="btn" style="left:140px;width:37px"></div>
<div style="position:absolute;left:183px;top:0;width:1px;height:44px;background:#242424"></div>
<div class="btn" style="left:188px;width:37px"></div>
<div class="btn dk" style="left:233px;width:34px"></div>
<div class="btn dk" style="left:275px;width:80px;top:9px;height:27px"></div>
<div class="btn" style="left:370px;width:36.5px"></div>
<div class="btn" style="left:412px;width:37.5px"></div>
<div class="btn" style="left:454.5px;width:37.5px"></div>
<div class="btn" style="left:504.5px;width:36.5px"></div>
<div class="btn" style="left:605px;width:65px;top:9px;height:27.5px"></div>
<div class="btn" style="left:676px;width:60px;top:9px;height:27.5px"></div>
<div class="t" style="left:296.500px;top:16px;color:#c9c9c9;font-weight:bold;font-size:11.200px;letter-spacing:-.250px">Default</div>
<div class="t" style="left:562.500px;top:16px;color:#9a9a9a;font-weight:bold;font-size:10.800px">Select</div>
<div class="t" style="left:621.500px;top:16px;color:#7d7d7d;font-size:12.300px">Same</div>
<div class="t" style="left:690.500px;top:16px;color:#747474;font-size:13px;letter-spacing:.600px">Object</div>
<div style="position:absolute;left:725px;top:0;width:236px;height:44px;background:#2e2e2e"></div><div style="position:absolute;left:729.500px;top:0;width:1.500px;height:44px;background:#242424"></div>
<div class="btn" style="left:737px;width:53px"></div>
<div class="btn" style="left:796px;width:53px"></div>
<div class="btn" style="left:854px;width:53px"></div>
<div class="btn dk" style="left:856.5px;width:34px;top:9px;height:22.5px;border-radius:3px"></div>
<svg width="960" height="44" viewBox="0 0 960 44">
<!-- hamburger -->
<g fill="#cfcfcf"><rect x="107" y="15.5" width="18" height="2"/><rect x="107" y="21" width="18" height="2"/><rect x="107" y="26.5" width="18" height="2"/></g>
<!-- dots -->
<g fill="#c4c4c4"><circle cx="151.5" cy="22.5" r="2.3"/><circle cx="158.5" cy="22.5" r="2.3"/><circle cx="165.5" cy="22.5" r="2.3"/></g>
<!-- pointer -->
<path d="M202 15.5v13l3.2-2.8 2.3 4.6 2-1-2.3-4.5 4.3-.4z" fill="#c2c2c2"/>
<path d="M225 36l-4 0 4-4z" fill="#4a4a4a"/>
<!-- hand -->
<g fill="#cfcfcf"><path d="M241.5 21.5c0-1.5 1.8-1.6 2.2-.2l.8 2.5 4-6.5c.8-1.3 2.4-.4 1.8.9l-1.5 3.2 1.5-.6c3.500 -.5 4.7 1.500 3.800 4.500-1 3.800-4.300 5.900-7.600 5.200-3.300-.7-4.900-4-5-9z"/></g>
<g stroke="#bdbdbd" stroke-width="1" stroke-linecap="round"><path d="M250.500 13.500v1.800M254 14.500l-1 1.500M256 17.500l-1.600.8"/></g>
<!-- default arrows -->
<g stroke="#bcbcbc" stroke-width="1.5" fill="none" stroke-linecap="round" stroke-linejoin="round"><path d="M286 18.500l-3.800 4 3.800 4M343.500 18.500l3.800 4-3.800 4"/></g>
<!-- arrange -->
<g><rect x="379.500" y="15" width="5.500" height="5.500" fill="#777"/><rect x="383.500" y="18.500" width="8" height="8" fill="#b9b9b9"/><rect x="390" y="25" width="5.500" height="5.500" fill="#777"/></g>
<path d="M406 36l-4 0 4-4z" fill="#4a4a4a"/>
<!-- flip -->
<path d="M429.500 16v14h-8z" fill="#c8c8c8"/><path d="M432 16v14h7.500z" fill="#8d8d8d"/>
<!-- align -->
<g><rect x="466.500" y="14.500" width="1.400" height="16" fill="#a9a9a9"/><rect x="469" y="18" width="7.500" height="3.600" fill="#8a8a8a"/><rect x="469" y="23.500" width="11.500" height="3.600" fill="#8a8a8a"/></g>
<!-- boolean add -->
<rect x="515" y="14.500" width="10.500" height="10.500" fill="#c9c9c9"/><circle cx="526.500" cy="26" r="5.600" fill="#c9c9c9"/><path d="M523.800 26h5.400M526.500 23.300v5.400" stroke="#3a3a3a" stroke-width="1.300"/>
<path d="M541 36l-3.500 0 3.500-3.500z" fill="#555"/>
<path d="M670 36.500l-4 0 4-4z" fill="#444"/>
<!-- zoom -->
<circle cx="756.500" cy="19.500" r="6" fill="#8d8d8d" stroke="#d8d8d8" stroke-width="2"/><path d="M752 24.500l-4.500 4.500" stroke="#d8d8d8" stroke-width="3" stroke-linecap="round"/>
<path d="M790 36l-5 0 5-5z" fill="#4e4e4e"/>
<!-- eye -->
<g stroke="#bdbdbd" stroke-width="1.300" fill="none" stroke-linecap="round" stroke-linejoin="round"><path d="M806 22l6.500-4.800c5-1.500 9 .5 10.500 4.300-1 1.800-2.800 3-5 3.500M806 22l4.500 4 2.500-1.500"/><path d="M816 19.500c2.500 0 3 3.500 0 4M815 20v8"/></g>
<path d="M849 36l-5 0 5-5z" fill="#4e4e4e"/>
<!-- magnet -->
<g transform="translate(874.500 20.500) rotate(45)"><path d="M-4.200 6V0A4.200 4.200 0 0 1 4.200 0V6" fill="none" stroke="#e6e6e6" stroke-width="3.300"/><path d="M-6.200 3.300H6.200" stroke="#232323" stroke-width="1.100"/></g>
<path d="M907 36l-5 0 5-5z" fill="#4e4e4e"/>
<!-- fullscreen -->
<rect x="930.500" y="15" width="14.500" height="14.500" rx="2" fill="#8f8f8f"/>
<g stroke="#2c2c2c" stroke-width="1.400" fill="none"><path d="M938.500 18h3.500v3.500M937 26.500h-3.500V23"/></g>
</svg>
<div id="topshadow" style="position:absolute;left:0;top:42.500px;width:961px;height:1.500px;background:#222"></div>

</div>
<div id="left">
<div style="position:absolute;left:8px;top:11px;width:28px;height:28px;background:#242424;border-radius:4px"></div>
<div style="position:absolute;left:0;top:566.500px;width:44px;height:2.500px;background:#262626"></div>
<svg width="44" height="676" viewBox="0 44 44 676">
<!-- move tool y=68 -->
<path d="M17.500 61v13.500l3.300-2.900 2.300 4.700 2.200-1.100-2.300-4.600 4.500-.4z" fill="none" stroke="#a8a8a8" stroke-width="1.300" stroke-linejoin="round"/>
<!-- node tool y=105 -->
<path d="M17.600 100.300L28 106l-10.400 5.800 2.600-5.800z" fill="#c9c9c9"/>
<path d="M35.500 118.500l-2.500 0 2.500-2.500z" fill="#555"/>
<!-- point transform y=142 -->
<circle cx="22.300" cy="142.300" r="6.300" fill="#5b58c0"/><circle cx="22.300" cy="142.300" r="8.200" fill="none" stroke="#8a88d8" stroke-width="1.300" stroke-dasharray="1.600 1.800"/><circle cx="22.300" cy="142.300" r="2.200" fill="none" stroke="#d0d0f0" stroke-width="1.200"/>
<path d="M26 134h5v5z" fill="#e0e0e0"/>
<!-- corner tool y=178 -->
<path d="M13.500 169.500h12v12h-12z" fill="#6a6a6a"/><path d="M13.500 169.500h12" stroke="#bdbdbd" stroke-width="1"/><path d="M13.500 169.500v14" stroke="#bdbdbd" stroke-width="1"/>
<path d="M31 170.500c1.500 2.500.5 6-2.500 7.500-4 1.500-6.500 3-7.500 7-.5 3-6 3-6-1 0-5 2.500-8.500 7-10 3.500-1 5.500-2 9-3.500z" fill="#a30a38"/>
<!-- pen tool y=214 -->
<path d="M24 207.500l3.500-3 4.500 4.500-3 3.500z" fill="#e0486a"/><path d="M23.500 208.500l5 5-5.500 6.500-9 3 3-9z" fill="#c9c9c9"/><path d="M14 223l6-6" stroke="#555" stroke-width="1"/><circle cx="20.500" cy="216.500" r="1.300" fill="#555"/>
<!-- pencil y=251 -->
<path d="M26 243.500l3-2.500 3 3-2.500 3z" fill="#8a3a9a"/><path d="M25.500 244l3.500 3.500-9.500 9.500-3.500-3.500z" fill="#c3c95e"/><path d="M16 253.500l3.500 3.500-5 1.500z" fill="#e8e8e8"/><path d="M18 260c3 1.500 4-2 6.500-2s2 2 5-.5" fill="none" stroke="#b9b9b9" stroke-width="1.200"/>
<!-- vector brush y=288 -->
<path d="M14.500 295c1-6 8-13 15.500-14.500-1 6.500-8 13.500-15.500 14.500z" fill="#d9693c"/><g fill="#d8d8d8"><rect x="15" y="280.500" width="2" height="2"/><rect x="17.500" y="283.500" width="2" height="2"/><rect x="27" y="290" width="2" height="2"/><rect x="28" y="293.500" width="2" height="2"/><rect x="25" y="292.500" width="1.500" height="1.500"/><rect x="14" y="283.500" width="1.500" height="1.500"/></g>
<!-- paint brush y=324 -->
<path d="M23 320c2-4 5-5.500 8.500-5.500 0 4-2 7-5.500 9z" fill="#1d8fc4"/><path d="M22.500 320.500l3.500 3.500c-2 3-5 4-9.500 3 0-4 3-6 6-6.500z" fill="#b9aba0"/><path d="M16 331c3 1.500 5 1 7-1.500s3-2 5-1" fill="none" stroke="#a9a9a9" stroke-width="1.300"/><rect x="28.500" y="324" width="2.200" height="9" fill="#cfcfcf"/>
<!-- knife y=360 -->
<path d="M25 353c1-2.500 5-2.500 6 0 .5 2-3 6-5 8l-3.500-3.500z" fill="#c87a6a"/><path d="M22.500 357.500l3.500 3.500-5 5-7.500 3 3.500-6.500z" fill="#a9a9a9"/>
<!-- fill/pixel y=397 -->
<path d="M19 392l8-3 4 4-1 7-8 4-4-4z" fill="#9a9a9a"/><path d="M22 394l5 1-1 4-4-1z" fill="#6f6f6f"/><circle cx="16" cy="403" r="2" fill="none" stroke="#b9b9b9" stroke-width="1.200"/><circle cx="21.500" cy="389.500" r="1.500" fill="#c9c9c9"/><circle cx="17" cy="395" r="1.300" fill="#c9c9c9"/><circle cx="29" cy="392" r="1.300" fill="#c9c9c9"/>
<!-- transparency/gradient y=433 -->
<g transform="translate(22.500 433) scale(.840) translate(-22 -433) rotate(-45 22 433)"><rect x="12.500" y="427" width="19" height="5.500" rx="2.500" fill="#9fb3b3"/><rect x="12.500" y="433.500" width="19" height="5.500" rx="2.500" fill="#b5c1c1"/><path d="M11 433h24" stroke="#cfcfcf" stroke-width="1"/><circle cx="10" cy="433" r="1.800" fill="none" stroke="#d0d0d0" stroke-width="1"/><circle cx="35" cy="433" r="1.800" fill="none" stroke="#d0d0d0" stroke-width="1"/></g>
<path d="M36 446.500l-3 0 3-3z" fill="#555"/>
<!-- crop y=470 -->
<g stroke="#d6d6d6" stroke-width="1.700" fill="none"><path d="M18.500 461.500v13.500h11.500"/><path d="M15 465.500h11.500v13.500"/></g><path d="M16 478l13-14" stroke="#8a8a8a" stroke-width="1"/>
<!-- rect y=506 -->
<rect x="15.500" y="500" width="13.500" height="13" fill="none" stroke="#b9b9b9" stroke-width="1.300"/>
<path d="M35.500 520l-3 0 3-3z" fill="#555"/>
<!-- shape builder y=543 -->
<circle cx="22" cy="543" r="8" fill="none" stroke="#1ea869" stroke-width="1.300" stroke-dasharray="1.800 1.800"/><rect x="19" y="540" width="11.500" height="11" fill="none" stroke="#1ea869" stroke-width="1.200" stroke-dasharray="1.800 1.800"/><path d="M19.500 540.500h5a6 6 0 0 1 2.500 5.500c-1 2.500-4 4-7.500 4z" fill="#1fd67c"/>
<!-- text y=579 -->
<rect x="14.500" y="571.500" width="16" height="16" fill="#3a3e3e" stroke="#3f7c78" stroke-width="1.200"/>
<text x="22.500" y="584.500" font-family="Liberation Sans, sans-serif" font-size="14.500" fill="#bdbdbd" text-anchor="middle">A</text>
<path d="M36 593l-3 0 3-3z" fill="#555"/>
<!-- x y=632 -->
<path d="M18.500 628.500l7.500 7.500M26 628.500l-7.500 7.500" stroke="#c4c4c4" stroke-width="1.300"/>
<!-- trash y=669 -->
<g stroke="#a9a9a9" stroke-width="1.400" fill="none" stroke-linejoin="round"><path d="M15.800 663.500h13.400"/><path d="M19.500 663.500c0-3.500 6-3.500 6 0"/><path d="M16.800 664.500l.7 13.500h10l.7-13.500"/><path d="M20.800 667v8.500M24.200 667v8.500"/></g>
</svg>

</div>
<div id="right">
<div style="position:absolute;left:0;top:95px;width:44px;height:2px;background:#252525"></div>
<div style="position:absolute;left:0;top:492px;width:44px;height:2px;background:#272727"></div>
<svg width="44" height="676" viewBox="1077 44 44 676">
<circle cx="1098.300" cy="69" r="13.500" fill="#6a00d6"/>
<path d="M1088.300 110.500c4-8 8-8 11-9.500s5-2.500 8-4.500c-1.500 3.500-4 5.500-7.500 7s-7.500 2-11.500 7z" fill="#c79aa6"/>
<text x="1098" y="128.500" font-family="Liberation Sans, sans-serif" font-size="8.600" fill="#585858" text-anchor="middle">0pt</text>
<!-- layers 160 -->
<g fill="none" stroke="#7d7d7d" stroke-width="1.300" stroke-linejoin="round"><path d="M1089.500 160.500v4l8.500 4 8.500-4v-4"/><path d="M1098 153l8.500 4v3.500l-8.500 4-8.500-4v-3.500z" fill="#7d7d7d"/></g><path d="M1098 155l5.500 2.700-5.500 2.700-5.500-2.700z" fill="#2a2a2a"/>
<!-- brush 197 -->
<path d="M1097 195c2-3 6-6.500 9-7.500.5 3-2.500 7-6 10z" fill="#777"/><path d="M1096.500 195.500l3.500 2.500c-1.500 3-5 4-9 3.500 2-1.500 3.500-4.500 5.500-6z" fill="#777"/><path d="M1091 204c3 1.500 5 1 7-1s4-3 6.500-2" fill="none" stroke="#777" stroke-width="1.400"/>
<!-- eye box 233 -->
<rect x="1091" y="225.500" width="14" height="15.500" fill="none" stroke="#757575" stroke-width="1.300"/><path d="M1092.500 227.500h11M1092.500 239h11" stroke="#757575" stroke-width="1"/><path d="M1092.500 233.300c3-4 8-4 11 0-3 4-8 4-11 0z" fill="#757575"/><circle cx="1098" cy="233.300" r="1.600" fill="#2c2c2c"/>
<!-- aperture 270 -->
<circle cx="1098" cy="270" r="6.600" fill="none" stroke="#727272" stroke-width="2.400"/><g fill="#727272"><rect x="1096.500" y="260.500" width="3" height="3"/><rect x="1096.500" y="276.500" width="3" height="3"/><rect x="1088.500" y="268.500" width="3" height="3"/><rect x="1104.500" y="268.500" width="3" height="3"/></g><path d="M1094 266l4 2.500 1 6M1098 268.500l4.500-3.500" stroke="#727272" stroke-width="1.300" fill="none"/>
<!-- FX 306 -->
<path d="M1091.500 298.500h13M1091.500 313.500h13" stroke="#8a8a8a" stroke-width="1.300"/>
<text x="1098" y="310.800" font-family="Liberation Sans, sans-serif" font-size="11.500" font-weight="bold" fill="#9a9a9a" text-anchor="middle" letter-spacing="-0.500">FX</text>
<!-- circle leaf 343 -->
<circle cx="1098" cy="342.500" r="7.600" fill="none" stroke="#6c6c6c" stroke-width="1.400"/><path d="M1095 346.500c-.5-4 2.500-7.500 7-8 .5 4.500-2.500 8-7 8z" fill="#6c6c6c"/>
<!-- a box 377 -->
<rect x="1091.500" y="368.500" width="13" height="15" fill="none" stroke="#8d8d8d" stroke-width="1.300"/>
<text x="1098" y="380.500" font-family="Liberation Sans, sans-serif" font-size="12" fill="#a5a5a5" text-anchor="middle">a</text>
<text x="1098" y="392.300" font-family="Liberation Sans, sans-serif" font-size="8.300" fill="#585858" text-anchor="middle">10pt</text>
<!-- list 418 -->
<g fill="#6f6f6f"><rect x="1091" y="410" width="14" height="1.200"/><rect x="1091" y="413.500" width="5.500" height="5" fill="#8a8a8a"/><rect x="1099" y="414" width="6" height="1.300"/><rect x="1099" y="417" width="6" height="1.300"/><rect x="1091" y="421.500" width="5.500" height="1.300"/><rect x="1091" y="424.500" width="5.500" height="1.300"/><circle cx="1102" cy="423.300" r="3" fill="#8a8a8a"/></g>
<!-- image stack 455 -->
<g fill="none" stroke="#767676" stroke-width="1.300"><rect x="1090.500" y="446.500" width="13.500" height="10.500"/><path d="M1106 449.500v10h-15.500M1106 452.500v10h-15.500" stroke-width="1.100"/></g><path d="M1091 455l4-4.500 3.500 3 2.500-2 3 3.500z" fill="#767676"/><circle cx="1100" cy="449.500" r="1.100" fill="#767676"/>
<!-- doc gear 492 -->
<path d="M1094 486v-3.500h7l4 4.500v12h-8" fill="none" stroke="#6f6f6f" stroke-width="1.300" stroke-linejoin="round"/><path d="M1101 482.500v4.500h4" fill="none" stroke="#6f6f6f" stroke-width="1.100"/>
<g fill="#8d8d8d"><circle cx="1095" cy="494" r="3.800"/><g stroke="#8d8d8d" stroke-width="2.200"><path d="M1095 488.500v11M1089.500 494h11M1091.100 490.100l7.800 7.800M1098.900 490.100l-7.800 7.800"/></g></g><circle cx="1095" cy="494" r="1.700" fill="#2c2c2c"/>
<!-- transform 559 -->
<rect x="1091" y="553" width="14" height="14" fill="none" stroke="#777" stroke-width="1.200" stroke-dasharray="2 1.500"/><g fill="#8a8a8a"><rect x="1089.700" y="551.700" width="2.600" height="2.600"/><rect x="1096.700" y="551.700" width="2.600" height="2.600"/><rect x="1103.700" y="551.700" width="2.600" height="2.600"/><rect x="1089.700" y="558.700" width="2.600" height="2.600"/><rect x="1096.700" y="558.700" width="2.600" height="2.600"/><rect x="1103.700" y="558.700" width="2.600" height="2.600"/><rect x="1089.700" y="565.700" width="2.600" height="2.600"/><rect x="1096.700" y="565.700" width="2.600" height="2.600"/><rect x="1103.700" y="565.700" width="2.600" height="2.600"/></g>
<!-- navigator 596 -->
<g fill="#858585"><path d="M1098 586.500l3.500 4.500h-7zM1098 605.500l3.500-4.500h-7zM1088.500 596l4.500-3.500v7zM1107.500 596l-4.500-3.500v7z"/></g><circle cx="1098" cy="596" r="3.600" fill="none" stroke="#858585" stroke-width="1.200"/>
<!-- clock 632 -->
<circle cx="1097.500" cy="632" r="7.600" fill="none" stroke="#767676" stroke-width="1.400"/><path d="M1097.500 626.500v6h5" fill="none" stroke="#a0a0a0" stroke-width="1.500"/><path d="M1103.500 629.500l3 2.500-3.500 1.500z" fill="#767676"/>
<!-- ? 669 -->
<rect x="1091" y="662" width="14" height="14" rx="1.500" fill="#8a8a8a"/>
<text x="1098" y="673.500" font-family="Liberation Sans, sans-serif" font-size="11.500" font-weight="bold" fill="#2c2c2c" text-anchor="middle">?</text>
</svg>

</div>
</div></div>
</div>
</body></html>
